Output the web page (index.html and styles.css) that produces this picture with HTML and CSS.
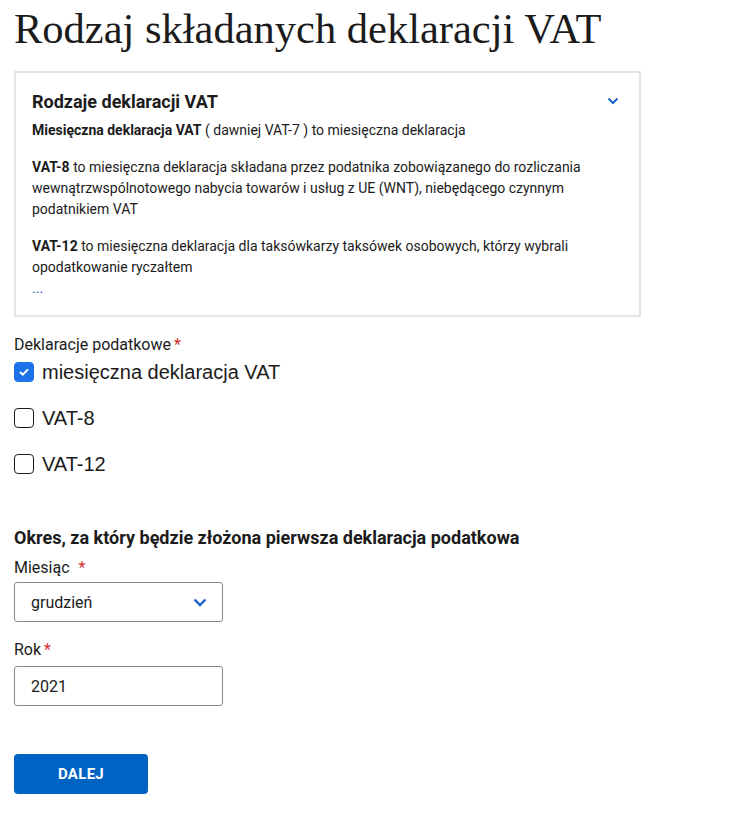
FILE: index.html
```html
<!DOCTYPE html>
<html lang="pl">
<head>
<meta charset="utf-8">
<link rel="stylesheet" href="styles.css">
</head>
<body>
<main class="page">
  <h1 class="title">Rodzaj składanych deklaracji VAT</h1>
  <section class="info">
    <div class="info-head">
      <h2 class="info-title">Rodzaje deklaracji VAT</h2>
      <svg class="info-chev" width="12" height="8" viewBox="0 0 12 8"><path d="M1.5 1.5 L6 6 L10.5 1.5" fill="none" stroke="#1a62c9" stroke-width="2"/></svg>
    </div>
    <p class="info-p first"><b>Miesięczna deklaracja VAT</b> ( dawniej VAT-7 ) to miesięczna deklaracja</p>
    <p class="info-p"><b>VAT-8</b> to miesięczna deklaracja składana przez podatnika zobowiązanego do rozliczania wewnątrzwspólnotowego nabycia towarów i usług z UE (WNT), niebędącego czynnym podatnikiem VAT</p>
    <p class="info-p"><b>VAT-12</b> to miesięczna deklaracja dla taksówkarzy taksówek osobowych, którzy wybrali opodatkowanie ryczałtem<br><span class="dots">...</span></p>
  </section>

  <div class="field-label">Deklaracje podatkowe<span class="req">*</span></div>
  <div class="checks">
    <label class="check"><span class="box checked"><svg width="12" height="10" viewBox="0 0 12 10"><path d="M2 5 L4.8 7.6 L10 2.4" fill="none" stroke="#fff" stroke-width="2"/></svg></span><span class="check-text">miesięczna deklaracja VAT</span></label>
    <label class="check"><span class="box"></span><span class="check-text">VAT-8</span></label>
    <label class="check"><span class="box"></span><span class="check-text">VAT-12</span></label>
  </div>

  <h3 class="section-title">Okres, za który będzie złożona pierwsza deklaracja podatkowa</h3>
  <div class="field-label">Miesiąc <span class="req sp">*</span></div>
  <div class="control select"><span>grudzień</span><svg width="14" height="9" viewBox="0 0 14 9"><path d="M1.5 1.5 L7 7 L12.5 1.5" fill="none" stroke="#1a62c9" stroke-width="2.4"/></svg></div>
  <div class="field-label rok">Rok<span class="req">*</span></div>
  <div class="control rok-input"><span>2021</span></div>

  <button class="btn">DALEJ</button>
</main>
</body>
</html>
```
FILE: styles.css
```css
* { box-sizing: border-box; }
html, body { margin: 0; padding: 0; background: #fff; }
body { font-family: Roboto, "Liberation Sans", sans-serif; color: #1b1b1b; }
.page { padding: 0 14px; display: flex; flex-direction: column; align-items: flex-start; }
.title {
  font-family: "Liberation Serif", "DejaVu Serif", serif;
  font-weight: 400; font-size: 42.5px; line-height: 58px;
  margin: 0 0 13px; color: #1b1b1b;
}
.info {
  width: 627px; border: 2px solid #e4e4e4; padding: 16px 16px 16px 16px;
  height: 246px;
}
.info-head { display: flex; justify-content: space-between; align-items: center; height: 24px; margin-bottom: 7px; padding-right: 1px; }
.info-title { font-size: 18px; font-weight: 700; margin: 0; color: #1b1b1b; }
.info-chev { margin-right: 3px; }
.info-p { font-size: 14px; line-height: 21px; margin: 0 0 16px; color: #1b1b1b; }
.info-p b { font-weight: 700; }
.dots { color: #1a62c9; }
.field-label { font-size: 16px; line-height: 20px; margin-top: 18px; color: #1b1b1b; }
.req { color: #d32f2f; margin-left: 3px; }
.req.sp { margin-left: 5px; }
.checks { display: flex; flex-direction: column; gap: 22px; margin-top: 5px; }
.check { display: flex; align-items: center; gap: 8px; height: 24px; }
.box {
  width: 20px; height: 20px; border: 1.5px solid #1b1b1b; border-radius: 4px;
  display: flex; align-items: center; justify-content: center; background: #fff;
}
.box.checked { background: #1a73e8; border-color: #1a73e8; }
.check-text { font-family: "Liberation Sans", Arial, sans-serif; font-size: 20px; color: #1b1b1b; }
.section-title { font-size: 18px; font-weight: 700; margin: 50px 0 0; line-height: 24px; }
.section-title + .field-label { margin-top: 8px; }
.control {
  width: 209px; height: 40px; border: 1px solid #8a8a8a; border-radius: 3px;
  margin-top: 4px; display: flex; align-items: center; justify-content: space-between;
  padding: 0 15px 0 16px; font-size: 16px; color: #1b1b1b;
}
.control.rok-input { margin-top: 6px; }
.field-label.rok { margin-top: 18px; }
.btn {
  margin-top: 48px; width: 134px; height: 40px; border: none; border-radius: 4px;
  background: #0063c3; color: #fff; font-family: Roboto, sans-serif; font-weight: 700;
  font-size: 15px; letter-spacing: 0.3px;
}
```
